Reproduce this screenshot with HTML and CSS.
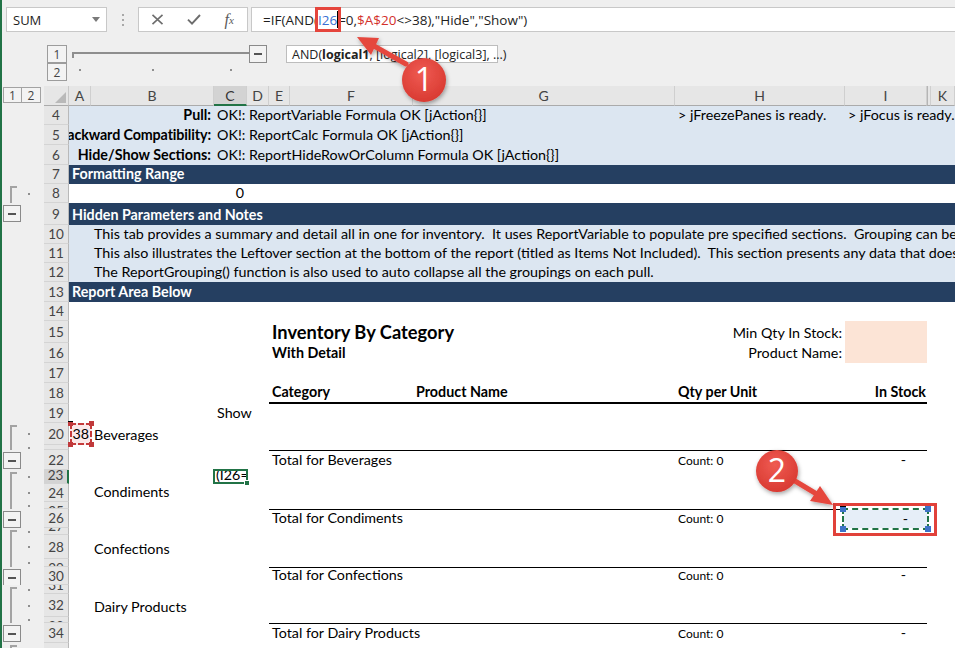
FILE: index.html
```html
<!DOCTYPE html>
<html lang="en">
<head>
<meta charset="utf-8">
<title>Inventory By Category</title>
<link rel="stylesheet" href="styles.css">
</head>
<body>
<div class="app">
  <div class="fbar">
    <div class="namebox"><span>SUM</span><span class="nb-arrow"></span></div>
    <div class="grip"><i></i><i></i><i></i></div>
    <div class="fxbtns">
      <span class="fxslot"><svg width="13" height="11" viewBox="0 0 13 11"><path d="M1.5 0.8L11.5 10.2M11.5 0.8L1.5 10.2" stroke="#6d6d6d" stroke-width="1.6" fill="none"/></svg></span>
      <span class="fxslot"><svg width="14" height="11" viewBox="0 0 14 11"><path d="M1 5.6L5 9.6L13 1" stroke="#6d6d6d" stroke-width="1.9" fill="none"/></svg></span>
      <span class="fxslot fx">f<sub>x</sub></span>
    </div>
    <div class="finput"><span>=IF(AND(</span><span class="hl"><span class="r1">I26</span><span class="caret"></span></span><span>=0,</span><span class="r2">$A$20</span><span>&lt;&gt;38),"Hide","Show")</span></div>
  </div>

  <div class="colol">
    <div class="obtn b1">1</div>
    <div class="obar"></div>
    <div class="ominus"><i></i></div>
    <div class="tip">AND(<b>logical1</b>, [logical2], [logical3], ...)</div>
    <div class="obtn b2">2</div>
    <div class="odot dA"><i></i></div>
    <div class="odot dB"><i></i></div>
    <div class="odot dC"><i></i></div>
  </div>

  <div class="sheet">
    <div class="row hdr">
      <div class="gut hg"><span class="lvbtn">1</span><span class="lvbtn">2</span></div>
      <div class="corner"><svg width="11" height="11" viewBox="0 0 11 11"><path d="M11 0V11H0Z" fill="#b9b9b9"/></svg></div>
      <div class="ch">A</div><div class="ch">B</div><div class="ch sel">C</div><div class="ch">D</div><div class="ch">E</div><div class="ch">F</div><div class="ch">G</div><div class="ch">H</div><div class="ch">I</div><div class="ch jj"></div><div class="ch">K</div>
    </div>

    <div class="row h19 blue"><div class="gut"></div><div class="rh">4</div>
      <div class="c sAB r b">Pull:</div><div class="c sCG">OK!: ReportVariable Formula OK [jAction{}]</div><div class="c cH">&gt; jFreezePanes is ready.</div><div class="c sIK">&gt; jFocus is ready.</div></div>
    <div class="row h20 blue"><div class="gut"></div><div class="rh">5</div>
      <div class="c sAB r b tight">Backward Compatibility:</div><div class="c sCK">OK!: ReportCalc Formula OK [jAction{}]</div></div>
    <div class="row h20 blue"><div class="gut"></div><div class="rh">6</div>
      <div class="c sAB r b">Hide/Show Sections:</div><div class="c sCK">OK!: ReportHideRowOrColumn Formula OK [jAction{}]</div></div>
    <div class="row h19 dark"><div class="gut"></div><div class="rh">7</div>
      <div class="c sAK">Formatting Range</div></div>
    <div class="row h19"><div class="gut"><span class="k top"></span><span class="dot"></span></div><div class="rh">8</div>
      <div class="c cC r">0</div></div>
    <div class="row h22 dark"><div class="gut"><span class="k min"></span></div><div class="rh">9</div>
      <div class="c sAK">Hidden Parameters and Notes</div></div>
    <div class="row h19 blue"><div class="gut"></div><div class="rh">10</div>
      <div class="c sBK">This tab provides a summary and detail all in one for inventory.  It uses ReportVariable to populate pre specified sections.  Grouping can be used to organize the output.</div></div>
    <div class="row h19 blue"><div class="gut"></div><div class="rh">11</div>
      <div class="c sBK">This also illustrates the Leftover section at the bottom of the report (titled as Items Not Included).  This section presents any data that doesn't fit a category.</div></div>
    <div class="row h19 blue"><div class="gut"></div><div class="rh">12</div>
      <div class="c sBK">The ReportGrouping() function is also used to auto collapse all the groupings on each pull.</div></div>
    <div class="row h20 dark"><div class="gut"></div><div class="rh">13</div>
      <div class="c sAK">Report Area Below</div></div>
    <div class="row h19"><div class="gut"></div><div class="rh">14</div></div>
    <div class="row h22"><div class="gut"></div><div class="rh">15</div>
      <div class="c sEG title">Inventory By Category</div><div class="c cH r">Min Qty In Stock:</div><div class="c cI peach"></div></div>
    <div class="row h20"><div class="gut"></div><div class="rh">16</div>
      <div class="c sEG b">With Detail</div><div class="c cH r">Product Name:</div><div class="c cI peach"></div></div>
    <div class="row h20"><div class="gut"></div><div class="rh">17</div></div>
    <div class="row h21"><div class="gut"></div><div class="rh">18</div>
      <div class="c sEF b thick">Category</div><div class="c cG b thick">Product Name</div><div class="c cH b thick">Qty per Unit</div><div class="c cI b r thick instock">In Stock</div></div>
    <div class="row h19"><div class="gut"></div><div class="rh">19</div>
      <div class="c sCD">Show</div></div>
    <div class="row h22"><div class="gut"><span class="k top"></span><span class="dot"></span></div><div class="rh">20</div>
      <div class="c cA open"><div class="refbox">38<i class="rq tl"></i><i class="rq tr"></i><i class="rq bl"></i><i class="rq br"></i></div></div>
      <div class="c cB">Beverages</div></div>
    <div class="row h5"><div class="gut"><span class="k mid"></span><span class="dot"></span></div><div class="rh tiny">21</div></div>
    <div class="row h20"><div class="gut"><span class="k min"></span></div><div class="rh">22</div>
      <div class="c sEG tl">Total for Beverages</div><div class="c cH tl small">Count: 0</div><div class="c cI tl dash">-</div></div>
    <div class="row h14"><div class="gut"><span class="k top"></span><span class="dot"></span></div><div class="rh sel low">23</div>
      <div class="c cC open"><div class="editbox"><span class="et">(I26=</span><i class="eh"></i></div></div></div>
    <div class="row h18"><div class="gut"><span class="k mid"></span><span class="dot"></span></div><div class="rh">24</div>
      <div class="c cB">Condiments</div></div>
    <div class="row h7"><div class="gut"><span class="k mid"></span><span class="dot"></span></div><div class="rh tiny">25</div></div>
    <div class="row h19 front"><div class="gut"><span class="k min"></span></div><div class="rh">26</div>
      <div class="c sEG tl">Total for Condiments</div><div class="c cH tl small">Count: 0</div>
      <div class="c cI tl open"><div class="selbox">-<i class="bq tl"></i><i class="bq tr"></i><i class="bq bl"></i><i class="bq br"></i></div></div></div>
    <div class="row h7"><div class="gut"><span class="k top"></span><span class="dot"></span></div><div class="rh tiny low">27</div></div>
    <div class="row h24"><div class="gut"><span class="k mid"></span><span class="dot"></span></div><div class="rh">28</div>
      <div class="c cB">Confections</div></div>
    <div class="row h8"><div class="gut"><span class="k mid"></span><span class="dot"></span></div><div class="rh tiny">29</div></div>
    <div class="row h18"><div class="gut"><span class="k min"></span></div><div class="rh">30</div>
      <div class="c sEG tl">Total for Confections</div><div class="c cH tl small">Count: 0</div><div class="c cI tl dash">-</div></div>
    <div class="row h9"><div class="gut"><span class="k top"></span><span class="dot"></span></div><div class="rh tiny low">31</div></div>
    <div class="row h23"><div class="gut"><span class="k mid"></span><span class="dot"></span></div><div class="rh">32</div>
      <div class="c cB">Dairy Products</div></div>
    <div class="row h6"><div class="gut"><span class="k mid"></span><span class="dot"></span></div><div class="rh tiny">33</div></div>
    <div class="row h20"><div class="gut"><span class="k min"></span></div><div class="rh">34</div>
      <div class="c sEG tl">Total for Dairy Products</div><div class="c cH tl small">Count: 0</div><div class="c cI tl dash">-</div></div>
    <div class="row h20"><div class="gut"><span class="k top"></span><span class="dot"></span></div><div class="rh tiny low">35</div></div>
  </div>

  <svg class="ann" width="955" height="648" viewBox="0 0 955 648">
    <defs>
      <filter id="sh" x="-40%" y="-40%" width="180%" height="180%">
        <feDropShadow dx="1" dy="2" stdDeviation="2" flood-color="#000" flood-opacity="0.35"/>
      </filter>
      <radialGradient id="rg" cx="45%" cy="35%" r="65%">
        <stop offset="0" stop-color="#ef5b52"/>
        <stop offset="1" stop-color="#d93a32"/>
      </radialGradient>
    </defs>
    <rect x="834.5" y="504.5" width="101" height="30" fill="none" stroke="#e1413a" stroke-width="3"/>
    <g filter="url(#sh)">
      <path d="M406 64L374 46" stroke="#e5473e" stroke-width="5" stroke-linecap="round" fill="none"/>
      <polygon points="357,37 379,38 371,55" fill="#e5473e"/>
      <circle cx="424" cy="80" r="22" fill="url(#rg)"/>
    </g>
    <g filter="url(#sh)">
      <path d="M795 481L815 493" stroke="#e5473e" stroke-width="5" stroke-linecap="round" fill="none"/>
      <polygon points="833,505 810,501 820,486" fill="#e5473e"/>
      <circle cx="777" cy="471" r="21" fill="url(#rg)"/>
    </g>
    <text class="badge" x="424" y="91" text-anchor="middle">1</text>
    <text class="badge" x="777" y="482" text-anchor="middle">2</text>
  </svg>
</div>
</body>
</html>
```

FILE: styles.css
```css
* { box-sizing: border-box; margin: 0; padding: 0; }
html, body { width: 955px; height: 648px; overflow: hidden; }
body { background: #fff; font-family: "Lato", "Liberation Sans", sans-serif; color: #000; }

.app {
  --cols: 42px 25px 22px 123px 33px 22px 21px 123px 262px 170px 82px 4px 1fr;
  position: relative;
  width: 955px;
  height: 648px;
  overflow: hidden;
  background: #efefef;
  border-left: 2px solid #217346;
}

/* formula bar */
.fbar {
  height: 37px;
  display: flex;
  align-items: flex-start;
  padding-top: 7px;
  font-family: "Open Sans", sans-serif;
  font-size: 13.5px;
  color: #1e1e1e;
}
.namebox {
  margin-left: 4px;
  width: 101px;
  height: 25px;
  background: #fff;
  border: 1px solid #c8c8c8;
  display: flex;
  align-items: center;
  justify-content: space-between;
  padding: 0 6px 0 6px;
  font-size: 13px;
}
.nb-arrow {
  width: 0; height: 0;
  border-left: 4.5px solid transparent;
  border-right: 4.5px solid transparent;
  border-top: 5px solid #7a7a7a;
}
.grip {
  margin-left: 14px;
  width: 3px;
  height: 25px;
  display: flex;
  flex-direction: column;
  justify-content: center;
  align-items: center;
  gap: 3px;
}
.grip i { width: 2px; height: 2px; background: #a8a8a8; }
.fxbtns {
  margin-left: 14px;
  width: 110px;
  height: 25px;
  background: #fff;
  border: 1px solid #c8c8c8;
  display: flex;
  align-items: center;
  padding-left: 1px;
}
.fxslot { width: 36px; display: flex; justify-content: center; align-items: center; }
.fx { font-family: "Liberation Serif", serif; font-style: italic; font-size: 16px; color: #5a5a5a; }
.fx sub { font-size: 11px; vertical-align: -2px; }
.finput {
  margin-left: 3px;
  flex: 1;
  height: 25px;
  background: #fff;
  border: 1px solid #c8c8c8;
  border-right: none;
  display: flex;
  align-items: center;
  padding-left: 11px;
  white-space: pre;
}
.hl {
  display: flex;
  align-items: center;
  height: 25px;
  border: 3px solid #e5453c;
  margin: 0 -3px;
  position: relative;
  z-index: 1;
}
.r1 { color: #3a6fd2; }
.r2 { color: #d3302b; }
.caret { width: 1px; height: 17px; background: #000; }

/* column outline */
.colol {
  height: 49px;
  padding-top: 8px;
  display: grid;
  grid-template-columns: var(--cols);
  grid-template-rows: 18px 18px;
}
.obtn {
  grid-column: 2;
  width: 20px;
  height: 18px;
  margin-left: 3px;
  border: 1px solid #9c9c9c;
  background: #f3f3f3;
  font: 12px "Open Sans", sans-serif;
  color: #444;
  display: flex;
  align-items: center;
  justify-content: center;
}
.obtn.b1 { grid-row: 1; }
.obtn.b2 { grid-row: 2; }
.obar {
  grid-row: 1;
  grid-column: 3 / 6;
  margin: 7px -2px 0 3px;
  height: 6px;
  border-top: 2px solid #8e8e8e;
  border-left: 2px solid #8e8e8e;
}
.ominus {
  grid-row: 1;
  grid-column: 6;
  margin-left: 2px;
  width: 18px;
  height: 18px;
  border: 1px solid #8a8a8a;
  background: #f3f3f3;
  display: flex;
  align-items: center;
  justify-content: center;
}
.ominus i { width: 8px; height: 2px; background: #555; }
.tip {
  grid-row: 1;
  grid-column: 7 / 10;
  margin-left: 17px;
  width: 212px;
  height: 18px;
  background: #fff;
  border: 1px solid #bdbdbd;
  font: 12.5px "Open Sans", sans-serif;
  color: #222;
  padding: 0 5px;
  display: flex;
  align-items: center;
  white-space: pre;
}
.tip b { font-weight: 700; }
.odot { grid-row: 2; display: flex; justify-content: center; padding-top: 6px; }
.odot i { width: 2px; height: 2px; background: #8f8f8f; }
.dA { grid-column: 3; }
.dB { grid-column: 4; }
.dC { grid-column: 5; }

/* sheet */
.row {
  display: grid;
  grid-template-columns: var(--cols);
  background: #fff;
  height: 20px;
}
.h5 { height: 5px; } .h6 { height: 6px; } .h7 { height: 7px; } .h8 { height: 8px; }
.h9 { height: 9px; } .h14 { height: 14px; } .h18 { height: 18px; } .h19 { height: 19px; }
.h20 { height: 20px; } .h21 { height: 21px; } .h22 { height: 22px; } .h23 { height: 23px; }
.h24 { height: 24px; }
.front { position: relative; z-index: 2; }

.hdr { background: #e6e6e6; }
.gut {
  grid-column: 1;
  background: #efefef;
  display: grid;
  grid-template-columns: 20px 22px;
  min-height: 0;
  overflow: hidden;
}
.hg { display: flex; align-items: flex-start; padding: 1px 0 0 1px; }
.lvbtn {
  width: 19px;
  height: 16px;
  border: 1px solid #a2a2a2;
  background: #f3f3f3;
  font: 12px "Open Sans", sans-serif;
  color: #444;
  display: flex;
  align-items: center;
  justify-content: center;
}
.lvbtn + .lvbtn { border-left: none; }
.corner {
  grid-column: 2;
  background: #e6e6e6;
  border-right: 1px solid #c8c8c8;
  border-bottom: 1px solid #ababab;
  display: flex;
  align-items: flex-end;
  justify-content: flex-end;
  padding: 0 2px 2px 0;
}
.ch {
  display: flex;
  align-items: center;
  justify-content: center;
  border-right: 1px solid #cfcfcf;
  border-bottom: 1px solid #ababab;
  font: 14px "Lato", sans-serif;
  color: #444;
  overflow: hidden;
}
.ch.sel { background: #d3d3d3; border-bottom: 2px solid #217346; color: #333; }
.ch.jj { border-left: 1px solid #b5b5b5; }

.rh {
  grid-column: 2;
  background: #e6e6e6;
  border-right: 1px solid #b9b9b9;
  border-bottom: 1px solid #d4d4d4;
  display: flex;
  align-items: center;
  justify-content: center;
  font: 13.5px "Lato", sans-serif;
  line-height: 16px;
  color: #444;
  overflow: hidden;
  min-height: 0;
}
.rh.sel { background: #d3d3d3; border-right: 2px solid #217346; }
.rh.tiny { align-items: flex-start; padding-top: 1px; }
.rh.tiny.low { align-items: flex-end; padding: 0; }
.rh.low { align-items: flex-end; }

/* outline gutter marks */
.k { grid-column: 1; }
.k.top { margin: 2px 0 0 8px; width: 7px; border-top: 2px solid #a3a3a3; border-left: 2px solid #a3a3a3; }
.k.mid { margin-left: 8px; width: 2px; background: #a3a3a3; }
.k.min {
  margin: 2px 0 0 1px;
  width: 18px;
  height: 17px;
  border: 1px solid #8a8a8a;
  background: #f3f3f3;
  display: flex;
  align-items: center;
  justify-content: center;
}
.k.min::before { content: ""; width: 8px; height: 2px; background: #555; }
.dot { grid-column: 2; display: flex; align-items: center; padding-left: 6px; }
.dot::before { content: ""; width: 2px; height: 2px; background: #8f8f8f; }

/* cells */
.c {
  display: flex;
  align-items: flex-end;
  padding: 0 3px 1px;
  white-space: pre;
  overflow: hidden;
  line-height: 18px;
  font-size: 14.3px;
  min-width: 0;
  min-height: 0;
}
.r { justify-content: flex-end; }
.b { font-weight: 700; }
.tight { letter-spacing: -0.12px; }
.blue { background: #dce6f1; }
.dark { background: #253f61; }
.dark .c { color: #fff; font-weight: 700; }

.cA { grid-column: 3; } .cB { grid-column: 4; } .cC { grid-column: 5; }
.cG { grid-column: 9; } .cH { grid-column: 10; } .cI { grid-column: 11; }
.sAB { grid-column: 3 / 5; } .sAK { grid-column: 3 / -1; } .sBK { grid-column: 4 / -1; }
.sCG { grid-column: 5 / 10; } .sCK { grid-column: 5 / -1; } .sCD { grid-column: 5 / 7; }
.sEG { grid-column: 7 / 10; } .sEF { grid-column: 7 / 9; } .sIK { grid-column: 11 / -1; }

.title { font-size: 18.3px; font-weight: 700; line-height: 22px; padding-bottom: 0; }
.peach { background: #fce4d6; }
.thick { border-bottom: 2px solid #000; }
.instock { padding-right: 1px; }
.tl { border-top: 1px solid #000; }
.small { font-size: 12px; line-height: 17px; }
.dash { justify-content: flex-end; padding-right: 21px; }

.open { overflow: visible; padding: 0; align-items: stretch; }

.refbox {
  position: relative;
  flex: none;
  margin-left: 1px;
  width: 22px;
  border: 2px dashed #c53a3a;
  background: #fbe9e9;
  display: flex;
  align-items: flex-end;
  justify-content: flex-end;
  padding: 0 1px 0 0;
}
.rq { position: absolute; width: 5px; height: 5px; background: #c0393b; }
.rq.tl { left: -4px; top: -4px; } .rq.tr { right: -4px; top: -4px; }
.rq.bl { left: -4px; bottom: -4px; } .rq.br { right: -4px; bottom: -4px; }

.editbox {
  position: relative;
  z-index: 3;
  flex: none;
  width: 35px;
  height: 15px;
  margin: -1px 0 0 -1px;
  border: 2px solid #217346;
  background: #fff;
  display: flex;
  align-items: flex-end;
  padding-left: 1px;
}
.et { display: block; height: 11px; overflow: hidden; line-height: 8px; font-size: 14.3px; }
.eh { position: absolute; right: -4px; bottom: -4px; width: 6px; height: 6px; background: #217346; border: 1px solid #fff; }

.selbox {
  position: relative;
  z-index: 3;
  flex: none;
  width: 87px;
  margin: -2px 0 -2px -3px;
  border: 2px solid #fff;
  background: #e6eef8;
  display: flex;
  align-items: flex-end;
  justify-content: flex-end;
  padding: 0 19px 0 0;
}
.selbox::before {
  content: "";
  position: absolute;
  left: -2px; top: -2px; right: -2px; bottom: -2px;
  border: 2px dashed #217346;
}
.bq { position: absolute; z-index: 1; width: 6px; height: 6px; background: #3e72c7; }
.bq.tl { left: -4px; top: -4px; } .bq.tr { right: -4px; top: -4px; }
.bq.bl { left: -4px; bottom: -4px; } .bq.br { right: -4px; bottom: -4px; }

/* annotations */
.ann { position: absolute; left: -2px; top: 0; pointer-events: none; z-index: 10; }
.badge { font-family: "Open Sans", sans-serif; font-size: 32px; fill: #fff; }
```
